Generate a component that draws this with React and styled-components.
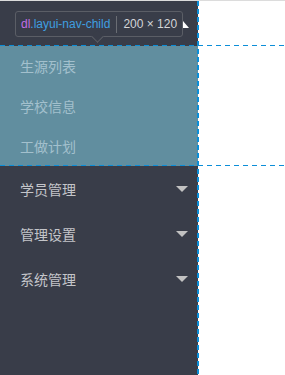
import styled, { createGlobalStyle } from "styled-components";

const Global = createGlobalStyle`
  html, body { margin: 0; padding: 0; background: #fff; }
  body { font-family: "Noto Sans CJK SC", "Noto Sans", sans-serif; }
`;

// styles
const Page = styled.div`
  position: relative;
  display: flex;
  width: 285px;
  height: 375px;
  overflow: hidden;
  border-top: 1px solid #dcdcdc;
  box-sizing: border-box;
`;

const Side = styled.ul`
  width: 198px;
  height: 100%;
  margin: 0;
  padding: 0;
  list-style: none;
  background-color: #393d49;
`;

const Item = styled.li`
  height: 45px;
  display: flex;
  align-items: center;
  justify-content: space-between;
  padding: 0 10px 0 20px;
  color: #c4c5c9;
  font-size: 14px;
`;

const Arrow = styled.span`
  width: 0;
  height: 0;
  border-top: 6px solid #c2c2c2;
  border-left: 6px solid transparent;
  border-right: 6px solid transparent;
`;

const Child = styled.dl`
  margin: 0;
  padding: 0;
  background-color: #618e9f;
`;

const ChildItem = styled.dd`
  margin: 0;
  height: 40px;
  display: flex;
  align-items: center;
  padding-left: 20px;
  color: #a3c0cd;
  font-size: 14px;
`;

const Guide = styled.div`
  position: absolute;
  ${(p) =>
    p.$vertical
      ? `left: 197px; top: 0; width: 2px; height: 100%;
         background: repeating-linear-gradient(to bottom, #0b8ed8 0 5px, transparent 5px 8px);`
      : `left: 0; top: ${p.$y}px; width: 100%; height: 1px;
         background: repeating-linear-gradient(to right, #0b8ed8 0 5px, transparent 5px 9px);`}
`;

const Tip = styled.div`
  position: absolute;
  left: 15px;
  top: 10px;
  width: 168px;
  height: 26px;
  box-sizing: border-box;
  display: flex;
  align-items: center;
  gap: 6px;
  padding: 0 0 0 5px;
  border: 1px solid #5b5e66;
  border-radius: 3px;
  background-color: #393d49;
  font-family: "Liberation Sans", "Open Sans", sans-serif;
  font-size: 12px;
  &::after {
    content: "";
    position: absolute;
    left: 77px;
    bottom: -5px;
    width: 8px;
    height: 8px;
    background-color: #393d49;
    border-right: 1px solid #5b5e66;
    border-bottom: 1px solid #5b5e66;
    transform: rotate(45deg);
  }
`;

const Tag = styled.span`
  color: #c16ee6;
`;

const Cls = styled.span`
  color: #3f9fe0;
`;

const Sep = styled.span`
  width: 1px;
  height: 17px;
  background-color: #6a6d74;
`;

const Size = styled.span`
  color: #d4d5d8;
`;

const Pointer = styled.svg`
  position: absolute;
  left: 183px;
  top: 20px;
`;

const subItems = ["生源列表", "学校信息", "工做计划"];
const items = ["学员管理", "管理设置", "系统管理"];

export default function App() {
  return (
    <>
      <Global />
      <Page>
        <Side>
          <Item />
          <Child>
            {subItems.map((t) => (
              <ChildItem key={t}>{t}</ChildItem>
            ))}
          </Child>
          {items.map((t) => (
            <Item key={t}>
              {t}
              <Arrow />
            </Item>
          ))}
        </Side>
        <Guide $vertical />
        <Guide $y={44} />
        <Guide $y={164} />
        <Tip>
          <span>
            <Tag>dl</Tag>
            <Cls>.layui-nav-child</Cls>
          </span>
          <Sep />
          <Size>200 × 120</Size>
        </Tip>
        <Pointer width="8" height="8" viewBox="0 0 8 8">
          <polygon points="0,0 0,7 6,7" fill="#fff" />
        </Pointer>
      </Page>
    </>
  );
}
